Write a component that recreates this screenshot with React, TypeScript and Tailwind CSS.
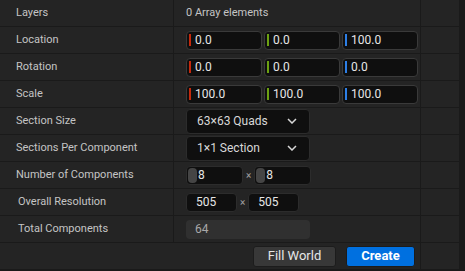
import React from 'react';

const font = { fontFamily: 'Roboto, "Noto Sans", sans-serif' };

const Row: React.FC<{ label: string; indent?: boolean; children?: React.ReactNode }> = ({ label, indent, children }) => (
  <div className="flex h-[27px] border-b border-[#1a1a1a]">
    <div className={`w-[174px] border-r border-[#1a1a1a] flex items-center text-[11px] text-[#c4c4c4] ${indent ? 'pl-[18px]' : 'pl-[16px]'}`}>
      {label}
    </div>
    <div className="w-[247px] border-r border-[#1a1a1a] flex items-center pl-[12px] gap-[2px]">{children}</div>
    <div className="flex-1" />
  </div>
);

const VecInput: React.FC<{ color: string; value: string }> = ({ color, value }) => (
  <div className="w-[76px] h-[19px] rounded-[4px] bg-[#0f0f0f] border border-[#3a3a3a] flex items-center pl-[2px]">
    <div className={`w-[2px] h-[12px] ${color}`} />
    <span className="ml-[4px] text-[12px] text-[#e6e6e6]">{value}</span>
  </div>
);

const Vec: React.FC<{ values: string[] }> = ({ values }) => (
  <>
    <VecInput color="bg-[#c5280c]" value={values[0]} />
    <VecInput color="bg-[#6ca112]" value={values[1]} />
    <VecInput color="bg-[#2d7fe6]" value={values[2]} />
  </>
);

const Dropdown: React.FC<{ value: string }> = ({ value }) => (
  <div className="w-[124px] h-[25px] rounded-[4px] bg-[#0f0f0f] border border-[#2c2c2c] flex items-center justify-between pl-[10px] pr-[12px]">
    <span className="text-[12px] text-[#d8d8d8]">{value}</span>
    <svg width="10" height="6" viewBox="0 0 10 6">
      <polyline points="1,1 5,5 9,1" fill="none" stroke="#d8d8d8" strokeWidth="1.5" />
    </svg>
  </div>
);

const Spin: React.FC<{ value: string }> = ({ value }) => (
  <div className="w-[57px] h-[19px] rounded-[4px] bg-[#0f0f0f] border border-[#2c2c2c] flex items-center pl-[1px]">
    <div className="w-[9px] h-[15px] rounded-[4px] bg-[#454545]" />
    <span className="ml-[1px] text-[12px] text-[#e6e6e6]">{value}</span>
  </div>
);

const Res: React.FC<{ value: string }> = ({ value }) => (
  <div className="w-[51px] h-[19px] rounded-[4px] bg-[#0f0f0f] border border-[#2c2c2c] flex items-center pl-[9px]">
    <span className="text-[12px] text-[#e6e6e6]">{value}</span>
  </div>
);

const Times = () => <span className="mx-[3px] text-[10px] text-[#a0a0a0]">×</span>;

export default function App() {
  return (
    <div className="w-[465px] h-[271px] bg-[#1a1a1a] flex" style={font}>
      <div className="w-[459px] h-[269px] bg-[#242424] flex flex-col">
        <Row label="Layers">
          <span className="text-[11px] text-[#c4c4c4]">0 Array elements</span>
        </Row>
        <Row label="Location">
          <Vec values={['0.0', '0.0', '100.0']} />
        </Row>
        <Row label="Rotation">
          <Vec values={['0.0', '0.0', '0.0']} />
        </Row>
        <Row label="Scale">
          <Vec values={['100.0', '100.0', '100.0']} />
        </Row>
        <Row label="Section Size">
          <Dropdown value="63×63 Quads" />
        </Row>
        <Row label="Sections Per Component">
          <Dropdown value="1×1 Section" />
        </Row>
        <Row label="Number of Components">
          <div className="flex items-center">
            <Spin value="8" />
            <Times />
            <Spin value="8" />
          </div>
        </Row>
        <Row label="Overall Resolution" indent>
          <div className="flex items-center">
            <Res value="505" />
            <Times />
            <Res value="505" />
          </div>
        </Row>
        <Row label="Total Components" indent>
          <div className="w-[124px] h-[19px] rounded-[4px] bg-[#303030] flex items-center pl-[9px]">
            <span className="text-[12px] text-[#a8a8a8]">64</span>
          </div>
        </Row>
        <div className="flex flex-1">
          <div className="w-[421px] border-r border-[#1a1a1a] flex items-center justify-end pr-[5px] gap-[10px]">
            <button className="w-[83px] h-[21px] rounded-[3px] bg-[#383838] border border-[#1c1c1c] text-[13px] text-[#e6e6e6] flex items-center justify-center">
              Fill World
            </button>
            <button className="w-[69px] h-[21px] rounded-[3px] bg-[#0070e0] border border-[#1c1c1c] text-[13px] font-bold text-white flex items-center justify-center">
              Create
            </button>
          </div>
          <div className="flex-1" />
        </div>
      </div>
    </div>
  );
}
